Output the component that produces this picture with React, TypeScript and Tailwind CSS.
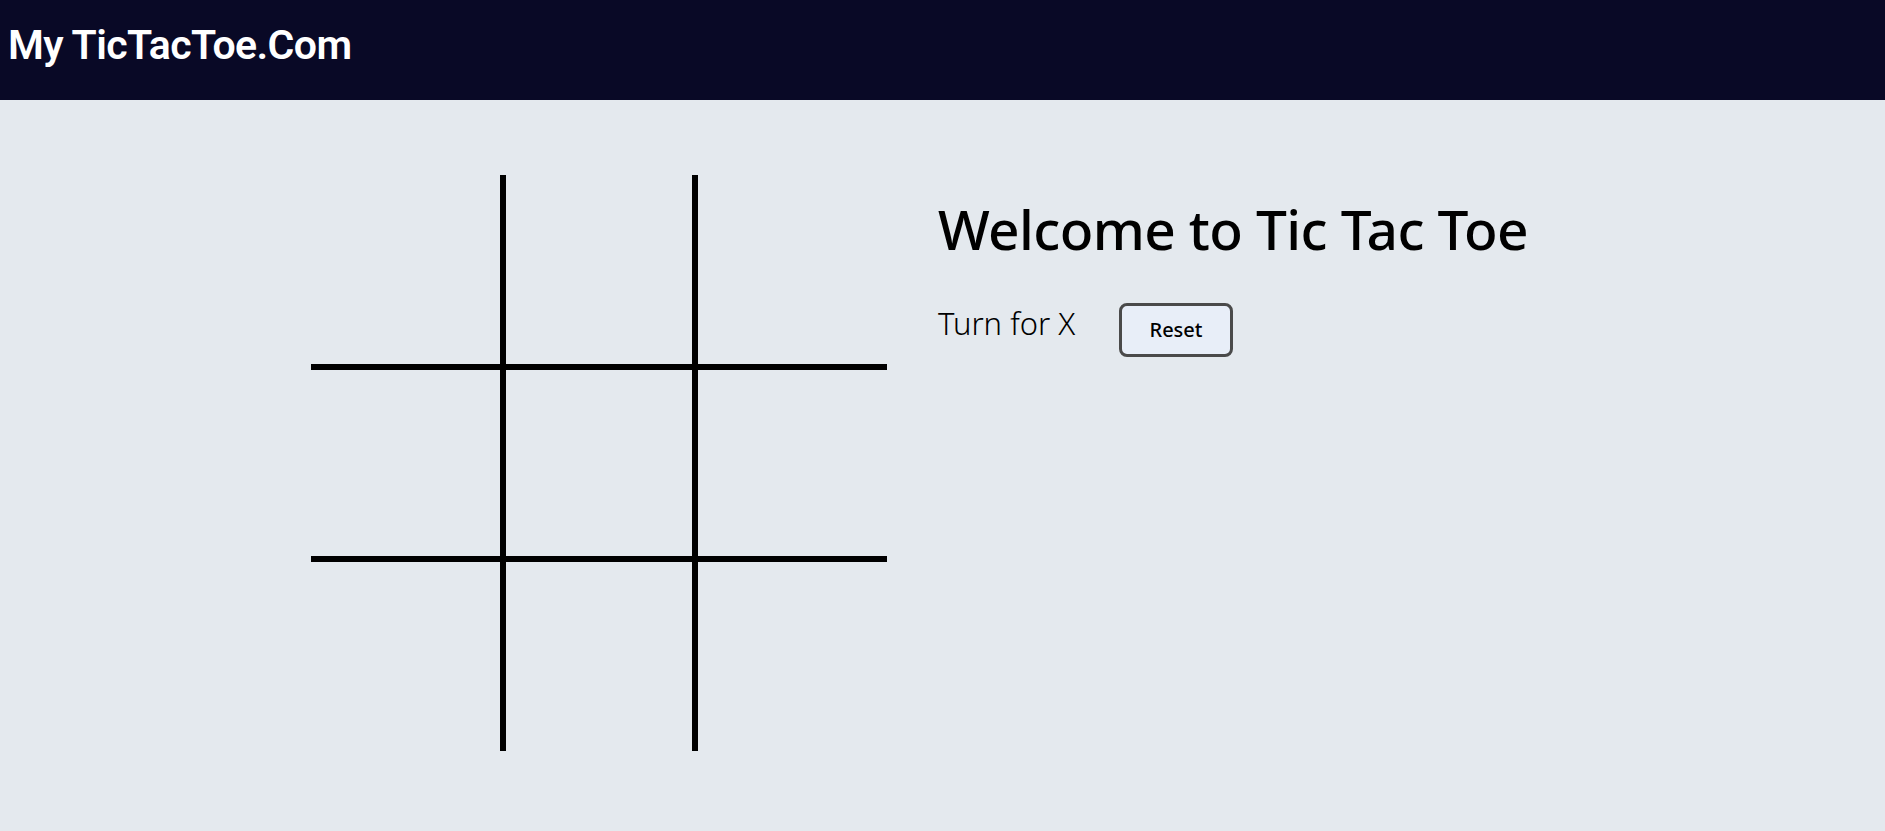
const cells = [0, 1, 2, 3, 4, 5, 6, 7, 8];

function cellBorder(i: number) {
  const row = Math.floor(i / 3);
  const col = i % 3;
  const cls: string[] = [];
  if (col < 2) cls.push("border-r-[3px]");
  if (col > 0) cls.push("border-l-[3px]");
  if (row < 2) cls.push("border-b-[3px]");
  if (row > 0) cls.push("border-t-[3px]");
  return cls.join(" ");
}

export default function App() {
  return (
    <div className="min-h-screen bg-[#e4e9ee] font-['Noto_Sans',sans-serif]">
      {/* header */}
      <header className="h-[100px] bg-[#090926] px-2 pt-[25px]">
        <h1 className="text-white text-[41px] leading-none font-semibold font-['Roboto',sans-serif] tracking-[-0.6px]">
          My TicTacToe.Com
        </h1>
      </header>

      <main className="flex pl-[311px] pt-[75px] gap-[51px]">
        {/* board */}
        <div className="grid grid-cols-3 w-[576px]">
          {cells.map((i) => (
            <div
              key={i}
              className={`h-[192px] w-[192px] border-black ${cellBorder(i)}`}
            />
          ))}
        </div>

        {/* info */}
        <div className="pt-[26px]">
          <h2 className="text-[55px] font-medium text-black leading-none tracking-[-0.6px]">
            Welcome to Tic Tac Toe
          </h2>
          <div className="flex items-start mt-[47px]">
            <span className="w-[181px] mt-[5px] text-[31px] leading-none font-light text-black">
              Turn for X
            </span>
            <button className="w-[114px] h-[54px] rounded-lg border-[3px] border-[#4a4a4a] bg-[#e8eef8] text-[20px] font-medium text-black">
              Reset
            </button>
          </div>
        </div>
      </main>
    </div>
  );
}
